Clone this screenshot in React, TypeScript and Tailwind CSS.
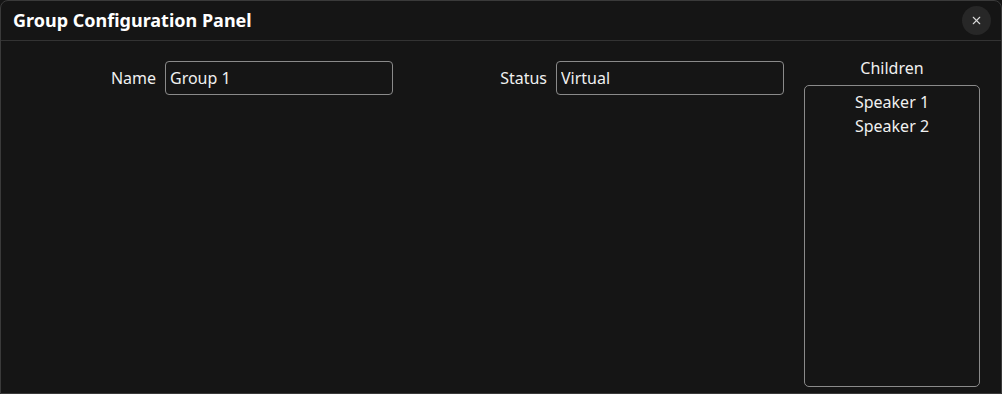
import { X } from "lucide-react";

const children = ["Speaker 1", "Speaker 2"];

export default function App() {
  return (
    <div
      className="w-[1002px] h-[394px] bg-[#151515] text-[#f0f0f0]"
      style={{ fontFamily: '"Noto Sans", "Open Sans", sans-serif' }}
    >
      <div className="flex flex-col h-full border border-[#3a3a3a] rounded-t-lg">
        <div className="flex items-center justify-between h-[40px] pl-[12px] pr-[10px] border-b border-[#333]">
          <h1 className="text-[18px] font-bold text-white">Group Configuration Panel</h1>
          <button className="flex items-center justify-center w-[29px] h-[29px] rounded-full bg-[#272727] text-[#d8d8d8]">
            <X size={13} strokeWidth={2} />
          </button>
        </div>

        <div className="flex flex-1 pt-[20px] pb-[6px] pr-[20px] pl-[1px]">
          <div className="flex justify-end items-start w-[391px] gap-[9px]">
            <label className="text-[16px] leading-[34px]">Name</label>
            <input
              defaultValue="Group 1"
              className="w-[228px] h-[34px] px-[4px] text-[16px] bg-transparent border border-[#8a8a8a] rounded-[4px] outline-none"
            />
          </div>
          <div className="flex justify-end items-start w-[391px] gap-[9px]">
            <label className="text-[16px] leading-[34px]">Status</label>
            <input
              defaultValue="Virtual"
              className="w-[228px] h-[34px] px-[4px] text-[16px] bg-transparent border border-[#8a8a8a] rounded-[4px] outline-none"
            />
          </div>
          <div className="flex flex-col items-center ml-[20px] -mt-[4px] w-[176px]">
            <div className="text-[16px] leading-[22px] mb-[6px]">Children</div>
            <div className="flex-1 w-full border border-[#8a8a8a] rounded-[5px] pt-[4px]">
              {children.map((c) => (
                <div key={c} className="text-center text-[16px] leading-[24px]">
                  {c}
                </div>
              ))}
            </div>
          </div>
        </div>
      </div>
    </div>
  );
}
